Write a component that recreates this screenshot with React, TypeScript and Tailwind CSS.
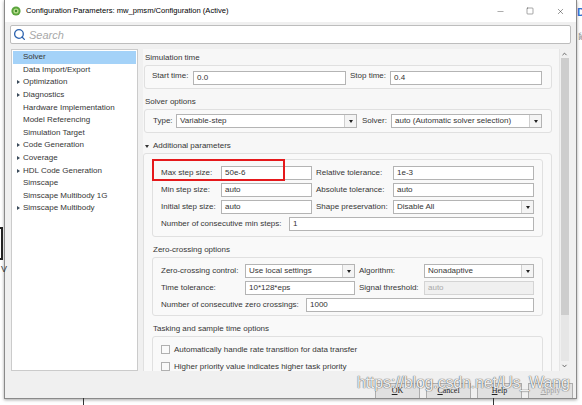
import { Search, Minus, Square, X, ChevronUp, ChevronDown } from "lucide-react";
import type { ReactNode } from "react";

const tree = [
  { label: "Solver", arrow: false, selected: true },
  { label: "Data Import/Export", arrow: false },
  { label: "Optimization", arrow: true },
  { label: "Diagnostics", arrow: true },
  { label: "Hardware Implementation", arrow: false },
  { label: "Model Referencing", arrow: false },
  { label: "Simulation Target", arrow: false },
  { label: "Code Generation", arrow: true },
  { label: "Coverage", arrow: true },
  { label: "HDL Code Generation", arrow: true },
  { label: "Simscape", arrow: false },
  { label: "Simscape Multibody 1G", arrow: false },
  { label: "Simscape Multibody", arrow: true },
];

function Tri() {
  return (
    <span className="h-0 w-0 border-l-[2.5px] border-r-[2.5px] border-t-[3px] border-l-transparent border-r-transparent border-t-[#222]" />
  );
}

function Field({ className, children, muted }: { className: string; children: ReactNode; muted?: boolean }) {
  return (
    <div
      className={`flex h-[14px] shrink-0 items-center border px-[3px] ${
        muted ? "border-[#d4d4d4] bg-[#f0f0f0] text-[#a9a9a9]" : "border-[#b4b4b4] bg-white text-[#333]"
      } ${className}`}
    >
      {children}
    </div>
  );
}

function Select({ className, children }: { className: string; children: ReactNode }) {
  return (
    <div className={`flex h-[14px] shrink-0 border border-[#b4b4b4] bg-white ${className}`}>
      <div className="flex flex-1 items-center overflow-hidden whitespace-nowrap px-[3px]">{children}</div>
      <div className="flex w-[12px] items-center justify-center border-l border-[#cfcfcf] bg-[#f4f4f4]">
        <Tri />
      </div>
    </div>
  );
}

function Label({ className, children }: { className: string; children: ReactNode }) {
  return <span className={`shrink-0 whitespace-nowrap ${className}`}>{children}</span>;
}

function Checkbox({ children }: { children: ReactNode }) {
  return (
    <div className="flex h-[9px] items-center gap-[4px]">
      <span className="h-[9px] w-[9px] shrink-0 border border-[#b0b0b0] bg-[#fafafa]" />
      <span>{children}</span>
    </div>
  );
}

const box = "rounded-[3px] border border-[#e0e0e0] bg-[#f9f9f9]";

export default function App() {
  return (
    <div className="relative h-[405px] w-[582px] overflow-hidden bg-white text-[8px] leading-[10px] text-[#363636] [font-family:'Liberation_Sans',Arial,sans-serif]">
      {/* stuff behind the dialog */}
      <div className="absolute left-[-4px] top-[227px] h-[33px] w-[7px] border-2 border-[#222]" />
      <span className="absolute left-[1px] top-[264px] text-[9px] text-[#333]">V</span>
      <span className="absolute left-[577px] top-[7px] text-[11px] font-bold text-[#2f6fd0]">D</span>
      <span className="absolute left-[578px] top-[32px] text-[8px] text-[#777]">鼠</span>
      <div className="absolute left-[83px] top-[398px] h-[7px] w-px bg-[#333]" />
      <div className="absolute left-[493px] top-[398px] h-[7px] w-px bg-[#333]" />

      {/* dialog window */}
      <div className="ml-[4px] flex h-[399px] w-[573px] flex-col border-x border-b border-[#8a8a8a] bg-[#f0f0f0] shadow-[0_1px_3px_rgba(0,0,0,0.35)]">
        {/* title bar */}
        <div className="flex h-[22px] shrink-0 items-center bg-white pl-[6px] text-black">
          <svg width="10" height="10" viewBox="0 0 10 10" className="shrink-0">
            <circle cx="5" cy="5" r="4.6" fill="#5aa43c" />
            <circle cx="5" cy="5" r="2.6" fill="#b8dd8e" />
            <circle cx="5" cy="5" r="1.2" fill="#3d8a2a" />
          </svg>
          <span className="ml-[5px] text-[7.6px]">Configuration Parameters: mw_pmsm/Configuration (Active)</span>
          <div className="ml-auto flex items-center text-[#222]">
            <Minus size={9} strokeWidth={1} className="mr-[21px]" />
            <Square size={8} strokeWidth={1.2} className="mr-[22px]" />
            <X size={9} strokeWidth={1.2} className="mr-[11px]" />
          </div>
        </div>

        {/* search */}
        <div className="mx-[5px] mt-[3px] flex h-[19px] shrink-0 items-center rounded-[2px] border border-[#bdbdbd] bg-white pl-[2px]">
          <Search size={13} strokeWidth={2.4} className="text-[#2b62ae]" />
          <span className="ml-[3px] text-[11px] italic text-[#a8a8a8]">Search</span>
        </div>

        {/* main */}
        <div className="mt-[5px] flex h-[322px] shrink-0">
          {/* tree */}
          <div className="ml-[6px] h-full w-[127px] shrink-0 border border-[#cbcbcb] bg-white pl-[1px] pt-[1px]">
            {tree.map((t) => (
              <div
                key={t.label}
                className={`flex h-[12.6px] w-[123px] items-center ${t.selected ? "bg-[#a4d2f8]" : ""}`}
              >
                <span className="flex w-[10px] shrink-0 justify-end pr-[3px]">
                  {t.arrow && (
                    <span className="h-0 w-0 border-b-[2.5px] border-l-[3.5px] border-t-[2.5px] border-b-transparent border-l-[#3a4a5a] border-t-transparent" />
                  )}
                </span>
                <span className="whitespace-nowrap">{t.label}</span>
              </div>
            ))}
          </div>

          {/* right panel */}
          <div className="ml-[5px] flex h-full w-[426px] shrink-0 bg-[#f7f7f7]">
            <div className="h-full w-[415px] shrink-0 overflow-hidden pt-[4px]">
              <div className="pl-[2px]">Simulation time</div>
              <div className={`ml-[1px] mt-[2px] flex h-[24px] w-[408px] items-start pl-[7px] pt-[5px] ${box}`}>
                <Label className="w-[41px]">Start time:</Label>
                <Field className="w-[153px]">0.0</Field>
                <Label className="ml-[4px] w-[40px]">Stop time:</Label>
                <Field className="w-[152px]">0.4</Field>
              </div>

              <div className="mt-[8px] pl-[2px]">Solver options</div>
              <div className={`ml-[1px] mt-[2px] flex h-[24px] w-[408px] items-start pl-[8px] pt-[4px] ${box}`}>
                <Label className="w-[23px] pt-[2px]">Type:</Label>
                <Select className="w-[181px]">Variable-step</Select>
                <Label className="ml-[5px] w-[29px] pt-[2px]">Solver:</Label>
                <Select className="w-[151px]">auto (Automatic solver selection)</Select>
              </div>

              <div className="mt-[8px] flex items-center pl-[2px]">
                <span className="mr-[4px] h-0 w-0 border-l-[2.5px] border-r-[2.5px] border-t-[3.5px] border-l-transparent border-r-transparent border-t-[#333]" />
                Additional parameters
              </div>

              {/* outer group */}
              <div className={`mt-[2px] h-[240px] w-[409px] px-[8px] pt-[5px] ${box}`}>
                <div className={`flex h-[78px] flex-col gap-[3px] pl-[8px] pt-[6px] ${box}`}>
                  <div className="flex items-center">
                    <Label className="w-[60px]">Max step size:</Label>
                    <Field className="w-[91px]">50e-6</Field>
                    <Label className="ml-[4px] w-[77px]">Relative tolerance:</Label>
                    <Field className="w-[141px]">1e-3</Field>
                  </div>
                  <div className="flex items-center">
                    <Label className="w-[60px]">Min step size:</Label>
                    <Field className="w-[91px]">auto</Field>
                    <Label className="ml-[4px] w-[77px]">Absolute tolerance:</Label>
                    <Field className="w-[141px]">auto</Field>
                  </div>
                  <div className="flex items-center">
                    <Label className="w-[60px]">Initial step size:</Label>
                    <Field className="w-[91px]">auto</Field>
                    <Label className="ml-[4px] w-[77px]">Shape preservation:</Label>
                    <Select className="w-[141px]">Disable All</Select>
                  </div>
                  <div className="flex items-center">
                    <Label className="w-[128px]">Number of consecutive min steps:</Label>
                    <Field className="w-[245px]">1</Field>
                  </div>
                </div>

                <div className="mt-[8px] pl-[1px]">Zero-crossing options</div>
                <div className={`mt-[2px] flex h-[59px] flex-col gap-[3px] pl-[8px] pt-[6px] ${box}`}>
                  <div className="flex items-center">
                    <Label className="w-[84px]">Zero-crossing control:</Label>
                    <Select className="w-[110px]">Use local settings</Select>
                    <Label className="ml-[4px] w-[65px]">Algorithm:</Label>
                    <Select className="w-[110px]">Nonadaptive</Select>
                  </div>
                  <div className="flex items-center">
                    <Label className="w-[84px]">Time tolerance:</Label>
                    <Field className="w-[110px]">10*128*eps</Field>
                    <Label className="ml-[4px] w-[65px]">Signal threshold:</Label>
                    <Field className="w-[110px]" muted>
                      auto
                    </Field>
                  </div>
                  <div className="flex items-center">
                    <Label className="w-[145px]">Number of consecutive zero crossings:</Label>
                    <Field className="w-[228px]">1000</Field>
                  </div>
                </div>

                <div className="mt-[8px] pl-[1px]">Tasking and sample time options</div>
                <div className={`mt-[2px] flex h-[60px] flex-col gap-[8px] pl-[8px] pt-[8px] ${box}`}>
                  <Checkbox>Automatically handle rate transition for data transfer</Checkbox>
                  <Checkbox>Higher priority value indicates higher task priority</Checkbox>
                </div>
              </div>
            </div>

            {/* scrollbar */}
            <div className="ml-[1px] flex h-full w-[10px] shrink-0 flex-col items-center border-l border-[#e6e6e6] bg-[#f0f0f0]">
              <ChevronUp size={7} strokeWidth={3} className="mt-[1px] h-[8px] text-[#555]" />
              <div className="h-[257px] w-[8px] bg-[#cdcdcd]" />
              <div className="w-[8px] flex-1 bg-[#e6e6e6]" />
              <ChevronDown size={7} strokeWidth={3} className="my-[1px] h-[8px] text-[#555]" />
            </div>
          </div>
        </div>

        {/* buttons */}
        <div className="flex flex-1 items-end justify-end gap-[6px] pr-[3px]">
          {["OK", "Cancel", "Help", "Apply"].map((b) => (
            <div
              key={b}
              className={`flex h-[15px] w-[45px] items-center justify-center border-x border-t border-[#adadad] bg-[#e1e1e1] text-[8px] [font-family:'Liberation_Serif',serif] ${
                b === "Apply" ? "text-[#a0a0a0]" : "text-[#222]"
              }`}
            >
              <span>
                <span className="underline">{b[0]}</span>
                {b.slice(1)}
              </span>
            </div>
          ))}
        </div>
      </div>

      {/* red annotation */}
      <div className="absolute left-[152px] top-[159px] h-[22px] w-[133px] border-2 border-[#e5191c]" />

      {/* watermark */}
      <div className="absolute left-[357px] top-[372px] whitespace-nowrap text-[16px] leading-[22px] tracking-[-0.01em] text-white/90 [text-shadow:0_0_1px_#555,0_0_1px_#555]">
        https://blog.csdn.net/Us_Wang
      </div>
    </div>
  );
}
